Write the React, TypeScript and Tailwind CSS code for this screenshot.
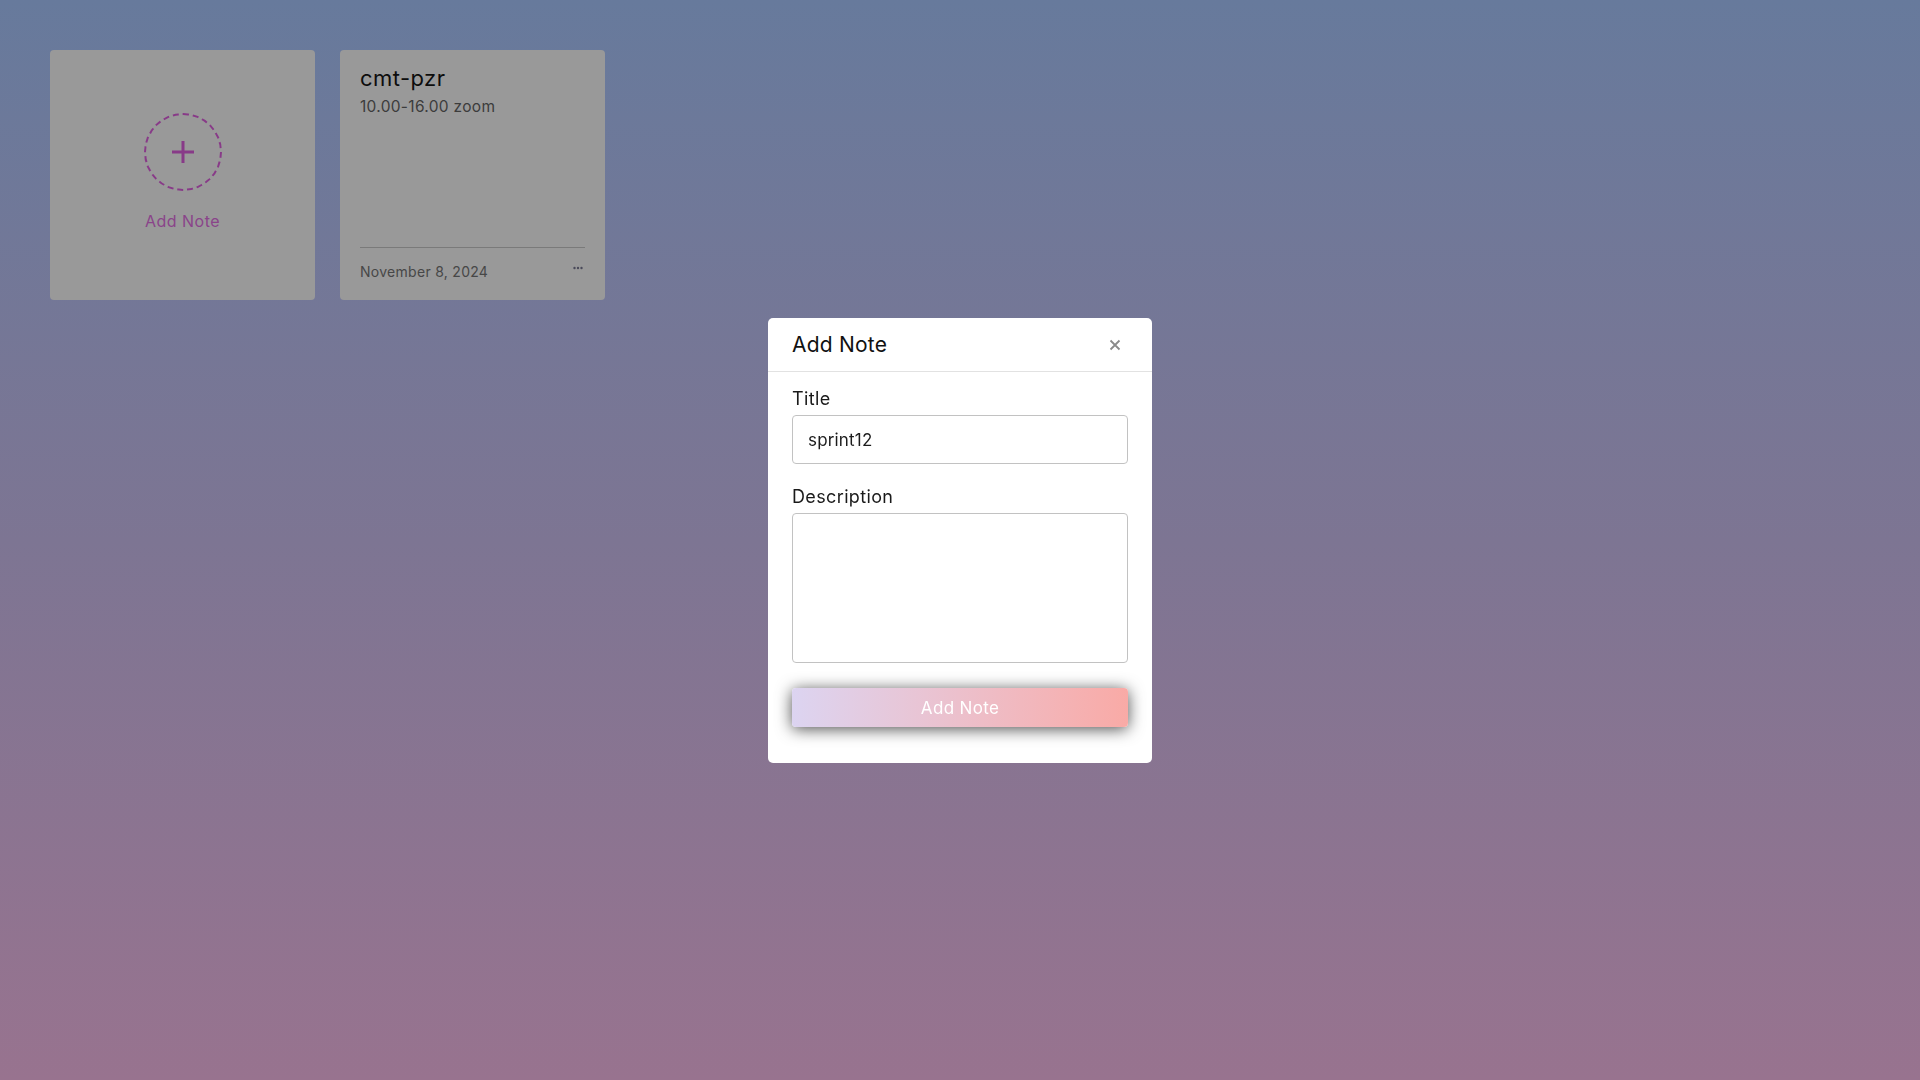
import React from "react";

const font = { fontFamily: "Inter, 'Noto Sans', sans-serif" };

function AddCard() {
  return (
    <div className="w-[265px] h-[250px] rounded-[4px] bg-[#999999] flex flex-col items-center pt-[63px]">
      <div className="w-[78px] h-[78px] rounded-full border-2 border-dashed border-[#883a88] flex items-center justify-center">
        <svg width="24" height="24" viewBox="0 0 24 24">
          <path d="M12 1v22M1 12h22" stroke="#883a88" strokeWidth="3" />
        </svg>
      </div>
      <div className="mt-[18px] text-[16px] leading-[24px] text-[#8a448a] tracking-[0.03em]">Add Note</div>
    </div>
  );
}

function NoteCard() {
  return (
    <div className="w-[265px] h-[250px] rounded-[4px] bg-[#999999] flex flex-col px-[20px] pt-[14px] pb-[18px]">
      <div className="text-[22px] leading-[28px] text-[#0d0d0d] tracking-[0.02em]">cmt-pzr</div>
      <div className="mt-[4px] text-[15.5px] leading-[22px] text-[#3c3c3c] tracking-[0.02em]">10.00-16.00 zoom</div>
      <div className="flex-1" />
      <div className="border-t border-[#7a7a7a] pt-[14px] flex items-start justify-between">
        <span className="text-[14px] leading-[20px] text-[#474747] tracking-[0.02em]">November 8, 2024</span>
        <svg width="10" height="4" viewBox="0 0 10 4" className="mt-[4px] mr-[2px]">
          <circle cx="1.5" cy="2" r="1.2" fill="#4a4a5a" />
          <circle cx="5" cy="2" r="1.2" fill="#4a4a5a" />
          <circle cx="8.5" cy="2" r="1.2" fill="#4a4a5a" />
        </svg>
      </div>
    </div>
  );
}

function Modal() {
  return (
    <div className="fixed inset-0 flex items-center justify-center">
      <div className="w-[384px] h-[445px] bg-white rounded-[5px] flex flex-col">
        <div className="h-[54px] border-b border-[#e2e2e2] flex items-center justify-between pl-[24px] pr-[31px] pt-[2px]">
          <span className="text-[21px] leading-[28px] text-[#111111] tracking-[0.01em]">Add Note</span>
          <svg width="12" height="12" viewBox="0 0 12 12">
            <path d="M1.5 1.5l9 9M10.5 1.5l-9 9" stroke="#8a8a8a" strokeWidth="1.8" />
          </svg>
        </div>
        <div className="flex flex-col px-[24px] pt-[14px]">
          <label className="text-[18px] leading-[26px] text-[#1a1a1a] tracking-[0.02em]">Title</label>
          <div className="mt-[3px] h-[49px] rounded-[4px] border border-[#c2c2c2] flex items-center pl-[15px] pt-[3px] text-[17px] text-[#1c1c1c] tracking-[0.01em]">
            sprint12
          </div>
          <label className="mt-[20px] text-[18px] leading-[26px] text-[#1a1a1a] tracking-[0.02em]">Description</label>
          <div className="mt-[3px] h-[150px] rounded-[4px] border border-[#c2c2c2]" />
          <button className="mt-[25px] h-[39px] pt-[3px] rounded-[4px] bg-gradient-to-r from-[#dcd4f1] to-[#f9aaa6] text-white text-[17px] tracking-[0.02em] shadow-[0_2px_16px_rgba(0,0,0,0.7)]">
            Add Note
          </button>
        </div>
      </div>
    </div>
  );
}

export default function App() {
  return (
    <div
      className="w-full h-[1080px] bg-gradient-to-b from-[#677a9c] via-[#7d7593] to-[#98738f]"
      style={font}
    >
      <div className="flex gap-[25px] p-[50px]">
        <AddCard />
        <NoteCard />
      </div>
      <Modal />
    </div>
  );
}
